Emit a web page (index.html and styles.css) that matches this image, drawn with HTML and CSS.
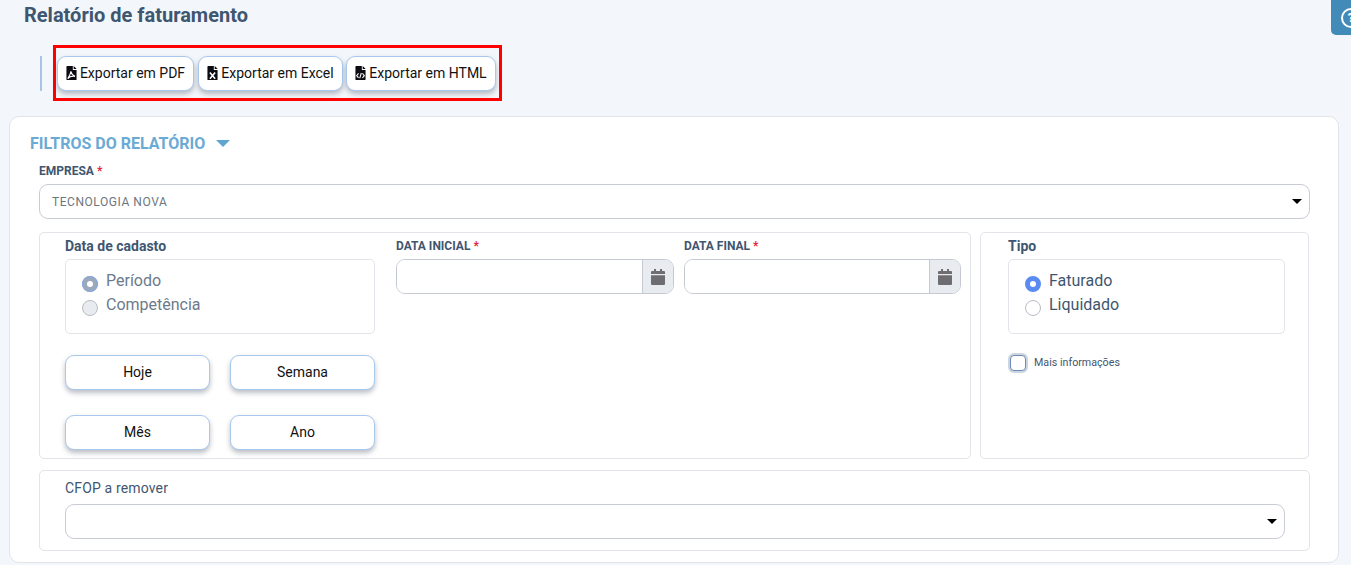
FILE: index.html
```html
<!DOCTYPE html>
<html lang="pt-BR">
<head>
<meta charset="utf-8">
<title>Relatório de faturamento</title>
<link rel="stylesheet" href="styles.css">
</head>
<body>
<svg class="defs" width="0" height="0" aria-hidden="true">
  <symbol id="file" viewBox="0 0 12 16">
    <path d="M0 1a1 1 0 0 1 1-1h6.500v4.500H12V15a1 1 0 0 1-1 1H1a1 1 0 0 1-1-1z" fill="#0b0b12"/>
    <path d="M8.500 0 12 3.500H8.500z" fill="#0b0b12"/>
  </symbol>
  <symbol id="cal" viewBox="0 0 14 16">
    <path d="M3 0h2v2h4V0h2v2h2a1 1 0 0 1 1 1v2H0V3a1 1 0 0 1 1-1h2zM0 6.200h14V15a1 1 0 0 1-1 1H1a1 1 0 0 1-1-1z" fill="#6e6e72"/>
  </symbol>
</svg>

<header class="page-head">
  <h1 class="page-title">Relatório de faturamento</h1>
  <button class="help" type="button" aria-label="Ajuda"><span class="help-ring">?</span></button>
</header>

<div class="toolbar">
  <span class="toolbar-bar"></span>
  <div class="export-box">
    <button class="btn btn-export" type="button">
      <svg class="file-icon" viewBox="0 0 12 16"><use href="#file"/><path d="M5.300 6c.4 2.500 1.400 4.500 4.700 5.800-2.600-.4-6-.2-8.200 2.700 1.500-2.800 3.400-5.600 3.500-8.500z" fill="none" stroke="#fff" stroke-width="1.300"/></svg>
      Exportar em PDF
    </button>
    <button class="btn btn-export" type="button">
      <svg class="file-icon" viewBox="0 0 12 16"><use href="#file"/><path d="M3 7.500l6 7M9 7.500l-6 7" fill="none" stroke="#fff" stroke-width="1.800"/></svg>
      Exportar em Excel
    </button>
    <button class="btn btn-export" type="button">
      <svg class="file-icon" viewBox="0 0 12 16"><use href="#file"/><path d="M3.800 8.500 1.600 11l2.200 2.500M8.200 8.500l2.200 2.500-2.200 2.500M6.900 8 5.100 14" fill="none" stroke="#fff" stroke-width="1.200"/></svg>
      Exportar em HTML
    </button>
  </div>
</div>

<main class="card">
  <h2 class="section-title">FILTROS DO RELATÓRIO <span class="section-caret"></span></h2>

  <div class="field-empresa">
    <label class="label-caps">EMPRESA <span class="req">*</span></label>
    <div class="select select-value"><span>TECNOLOGIA NOVA</span><i class="caret"></i></div>
  </div>

  <div class="panels">
    <section class="panel panel-left">
      <div class="col-data">
        <div class="group-title">Data de cadasto</div>
        <div class="radio-box">
          <div class="radio-row muted"><span class="radio radio-on-disabled"></span>Período</div>
          <div class="radio-row muted"><span class="radio radio-off-disabled"></span>Competência</div>
        </div>
        <div class="quick">
          <button class="btn btn-quick" type="button">Hoje</button>
          <button class="btn btn-quick" type="button">Semana</button>
          <button class="btn btn-quick" type="button">Mês</button>
          <button class="btn btn-quick" type="button">Ano</button>
        </div>
      </div>
      <div class="date-field">
        <label class="label-caps">DATA INICIAL <span class="req">*</span></label>
        <div class="date-input"><span class="date-main"></span><span class="date-addon"><svg class="cal-icon" viewBox="0 0 14 16"><use href="#cal"/></svg></span></div>
      </div>
      <div class="date-field date-field-last">
        <label class="label-caps">DATA FINAL <span class="req">*</span></label>
        <div class="date-input"><span class="date-main"></span><span class="date-addon"><svg class="cal-icon" viewBox="0 0 14 16"><use href="#cal"/></svg></span></div>
      </div>
    </section>

    <section class="panel panel-right">
      <div class="group-title">Tipo</div>
      <div class="radio-box">
        <div class="radio-row"><span class="radio radio-on"></span>Faturado</div>
        <div class="radio-row"><span class="radio radio-off"></span>Liquidado</div>
      </div>
      <label class="check-row"><span class="check"></span>Mais informações</label>
    </section>
  </div>

  <section class="panel panel-cfop">
    <div class="cfop-label">CFOP a remover</div>
    <div class="select"><span></span><i class="caret"></i></div>
  </section>
</main>
</body>
</html>
```
FILE: styles.css
```css
* { box-sizing: border-box; }
html, body { margin: 0; height: 565px; overflow: hidden; }
body { background: #f3f6fa; font-family: Roboto, "Liberation Sans", sans-serif; color: #3f5670; }
.defs { position: absolute; }

.page-head { height: 45px; padding: 3px 0 0 24px; }
.page-title { margin: 0; font-size: 20px; line-height: 24px; font-weight: 700; color: #3f5670; }
.help {
  position: absolute; top: 0; right: 0; width: 20px; height: 35px; padding: 0 0 0 10px;
  border: 0; border-radius: 0 0 0 5px; background: #428bb9; overflow: hidden;
  display: flex; align-items: center;
}
.help-ring {
  flex: none; width: 20px; height: 20px; border: 2px solid #fff; border-radius: 50%;
  color: #fff; font: 700 13px/16px Roboto, sans-serif; text-align: center;
}

.toolbar { display: flex; align-items: center; height: 56px; padding-left: 40px; }
.toolbar-bar { width: 2px; height: 35px; background: #a9c4e4; margin-right: 11px; }
.export-box { display: flex; gap: 4px; align-items: center; flex: none; width: 449px; height: 56px; padding: 0 0 0 1px; border: 3px solid #f00; }
.btn {
  background: #fff; border: 1px solid #a9c8ee; border-radius: 9px; color: #111;
  font: 400 14px/20px Roboto, sans-serif; box-shadow: 0 3px 5px rgba(60, 70, 90, .35); padding: 0; cursor: pointer;
}
.btn-export { display: flex; align-items: center; justify-content: center; gap: 3px; height: 35px; flex: none; white-space: nowrap; }
.btn-export:nth-child(1) { width: 137px; }
.btn-export:nth-child(2) { width: 145px; }
.btn-export:nth-child(3) { width: 150px; margin-left: -1px; }
.file-icon { width: 11px; height: 14px; flex: none; }

.card {
  margin: 15px 12px 0 9px; height: 447px; padding: 15px 28px 0 20px;
  background: #fff; border: 1px solid #e1e4e8; border-radius: 10px;
}
.section-title { margin: 0; height: 23px; font-size: 16px; line-height: 23px; font-weight: 700; color: #6aaad4; }
.section-caret { display: inline-block; margin-left: 7px; vertical-align: 2px; border: 7px solid transparent; border-top-color: #5ea5d0; border-bottom: 0; }

.field-empresa { margin-left: 9px; padding-top: 8px; }
.label-caps { display: block; height: 21px; font-size: 12px; line-height: 16px; font-weight: 700; color: #3f5670; }
.req { color: #e0253a; }
.select {
  display: flex; justify-content: space-between; align-items: center; height: 35px; padding: 0 7px 0 13px;
  border: 1px solid #c8ccd4; border-radius: 9px; background: #fff;
}
.select-value { font-size: 12px; color: #6d7680; letter-spacing: .55px; padding-left: 12px; }
.caret { width: 0; height: 0; border: 5px solid transparent; border-top-color: #000; border-bottom: 0; }

.panels { display: flex; gap: 9px; margin: 13px 0 11px 9px; }
.panel { border: 1px solid #e1e4e8; border-radius: 5px; background: #fff; }
.panel-left { display: flex; width: 932px; height: 227px; padding-left: 25px; }
.panel-right { width: 329px; height: 227px; padding-left: 27px; }
.col-data { width: 310px; margin-right: 21px; flex: none; }
.group-title { height: 26px; font-size: 14px; line-height: 26px; font-weight: 700; color: #3f5670; }
.radio-box { width: 310px; height: 75px; padding: 9px 0 0 16px; border: 1px solid #e1e4e8; border-radius: 5px; }
.panel-right .radio-box { width: 277px; }
.radio-row { display: flex; align-items: flex-start; gap: 8px; height: 24px; font-size: 16px; line-height: 24px; color: #3f5670; }
.radio-row.muted { color: #6c7a8c; }
.radio { flex: none; width: 16px; height: 16px; margin-top: 7px; border-radius: 50%; }
.radio-on { background: #fff; border: 5px solid #5a8bf0; }
.radio-off { background: #fff; border: 1px solid #b8bcc4; }
.radio-on-disabled { background: #fff; border: 5px solid #9ba9bc; outline: 1px solid #86a6e8; outline-offset: -1px; }
.radio-off-disabled { background: #e8ebef; border: 1px solid #b8bcc4; }

.quick { display: grid; grid-template-columns: 145px 145px; column-gap: 20px; row-gap: 25px; margin-top: 21px; }
.btn-quick { height: 35px; padding-bottom: 2px; }

.date-field { width: 278px; margin-right: 10px; flex: none; padding-top: 5px; }
.date-field-last { width: 277px; }
.date-input { display: flex; height: 35px; border: 1px solid #c4c9d2; border-radius: 9px; overflow: hidden; }
.date-main { flex: 1; background: #fff; }
.date-addon { width: 31px; display: flex; align-items: center; justify-content: center; background: #e8ebef; border-left: 1px solid #c4c9d2; }
.cal-icon { width: 14px; height: 16px; }

.check-row { display: flex; align-items: center; gap: 8px; margin-top: 21px; margin-left: 2px; font-size: 10.700px; line-height: 16px; color: #3f5670; }
.check { width: 16px; height: 16px; border: 1px solid #6a8bb5; border-radius: 4px; background: #fff; box-shadow: 0 0 0 2px #ccd5e0; }

.panel-cfop { margin-left: 9px; width: 1271px; height: 81px; padding: 6px 24px 0 25px; }
.cfop-label { height: 27px; font-size: 14px; line-height: 23px; letter-spacing: .15px; color: #3f5670; }
```
